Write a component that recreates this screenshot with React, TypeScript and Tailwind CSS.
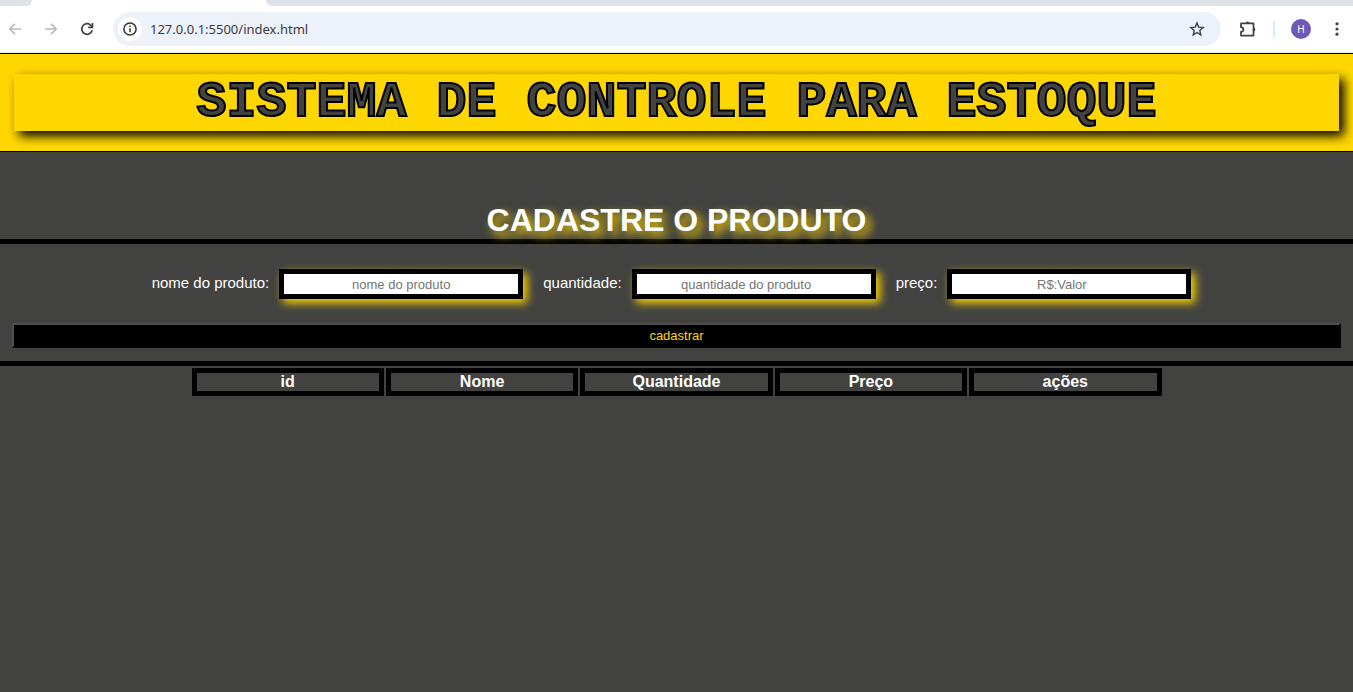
import React from "react";

const fields = [
  { id: "nome", type: "text", label: "nome do produto:", placeholder: "nome do produto" },
  { id: "quantidade", type: "number", label: "quantidade:", placeholder: "quantidade do produto" },
  { id: "preco", type: "number", label: "preço:", placeholder: "R$:Valor" },
];

const columns = ["id", "Nome", "Quantidade", "Preço", "ações"];

function Arrow({ flip = false }: { flip?: boolean }) {
  return (
    <svg viewBox="0 0 16 16" className={flip ? "size-4 rotate-180" : "size-4"} fill="none" stroke="#b9bbb9" strokeWidth="1.7">
      <path d="M14 8H3M8 2.8 2.8 8 8 13.2" />
    </svg>
  );
}

function BrowserBar() {
  return (
    <div className="bg-white font-['Noto_Sans',sans-serif]">
      <div className="flex h-1.5 justify-between bg-white">
        <div className="w-8 rounded-br-lg bg-[#dee1e8]" />
        <div className="ml-[234px] flex-1 rounded-bl-lg bg-[#dee1e8]" />
      </div>
      <div className="flex h-[46px] items-center pr-2">
        <button aria-label="Voltar" className="ml-[7px]"><Arrow /></button>
        <button aria-label="Avançar" className="ml-5"><Arrow flip /></button>
        <button aria-label="Recarregar" className="ml-5">
          <svg viewBox="0 0 16 16" className="size-4" fill="none" stroke="#414344" strokeWidth="1.7">
            <path d="M13.2 9.3A5.3 5.3 0 1 1 12 4.4L13.5 6" />
            <path d="M13.5 2v4.3H9.2" />
          </svg>
        </button>
        <div className="ml-[18px] flex h-[34px] flex-1 items-center rounded-full bg-[#ecf1fa] pr-4 pl-[5px]">
          <button aria-label="Informações do site" className="grid size-6 place-items-center rounded-full bg-white">
            <svg viewBox="0 0 16 16" className="size-4" fill="none" stroke="#303234" strokeWidth="1.5">
              <circle cx="8" cy="8" r="6.1" />
              <path d="M8 7.2v4M8 4.5v1.6" />
            </svg>
          </button>
          <input
            aria-label="Endereço"
            defaultValue="127.0.0.1:5500/index.html"
            className="ml-2 min-w-0 flex-1 bg-transparent text-[13px] leading-5 text-[#3a3c3f] outline-none"
          />
          <button aria-label="Favoritar">
            <svg viewBox="0 0 16 16" className="size-4" fill="none" stroke="#414344" strokeWidth="1.4">
              <path d="m8 1.9 1.7 4.2 4.5.4-3.4 3 1 4.4L8 11.5l-3.8 2.4 1-4.4-3.4-3 4.5-.4z" />
            </svg>
          </button>
        </div>
        <button aria-label="Extensões" className="ml-[18px]">
          <svg viewBox="0 0 18 18" className="size-[18px]" fill="none" stroke="#414344" strokeWidth="1.8" strokeLinejoin="round">
            <path d="M2 3.4h12.5v12.2H2v-3.8c3.2-.2 3.2-4.4 0-4.6z" />
            <path d="M6.8 3.2a1.8 1.8 0 0 1 3.6 0zM14.7 7.8a1.7 1.7 0 0 1 0 3.4z" fill="#414344" stroke="none" />
          </svg>
        </button>
        <div className="ml-4 h-4 w-0.5 bg-[#ceeffa]" />
        <button aria-label="Perfil" className="ml-4 grid size-5 place-items-center rounded-full bg-[#7058b8] text-[10px] text-white">
          H
        </button>
        <button aria-label="Menu" className="ml-[18px]">
          <svg viewBox="0 0 16 16" className="size-4" fill="#414344">
            <circle cx="8" cy="2.8" r="1.6" />
            <circle cx="8" cy="8" r="1.6" />
            <circle cx="8" cy="13.2" r="1.6" />
          </svg>
        </button>
      </div>
      <div className="h-px bg-[#e3e4e6]" />
    </div>
  );
}

export default function App() {
  return (
    <div className="min-h-screen bg-[#424240] font-['Liberation_Sans',Arial,sans-serif] text-white">
      <BrowserBar />
      <header className="border-y border-black bg-[#ffd700] px-3.5 py-5">
        <h1 className="text-center font-['Liberation_Mono','Courier_New',monospace] text-[50px] leading-[57px] font-bold text-[#424240] shadow-[5px_5px_10px_black] [-webkit-text-stroke:2px_black]">
          SISTEMA DE CONTROLE PARA ESTOQUE
        </h1>
      </header>
      <main>
        <h2 className="mt-[50px] border-b-5 border-black text-center text-[32px] leading-[37px] font-bold [text-shadow:5px_5px_10px_#ffd700]">
          CADASTRE O PRODUTO
        </h2>
        <form className="border-b-5 border-black px-3 pt-[25px] pb-[13px]" onSubmit={(e) => e.preventDefault()}>
          <div className="mr-2.5 flex flex-wrap items-center justify-center gap-5">
            {fields.map((f) => (
              <div key={f.id} className="flex items-center gap-2.5">
                <label htmlFor={f.id} className="pb-0.5 text-[15px] leading-5">
                  {f.label}
                </label>
                <input
                  id={f.id}
                  type={f.type}
                  placeholder={f.placeholder}
                  className="h-[30px] w-[244px] border-5 border-black bg-white text-center text-[13px] text-black shadow-[4px_4px_10px_#ffd700] placeholder:text-[#757575]"
                />
              </div>
            ))}
          </div>
          <button
            type="submit"
            className="mt-6 block w-full border-2 border-t-[#4e4e4e] border-r-black border-b-black border-l-[#4e4e4e] bg-black text-[13px] leading-[21px] text-[#ffd700]"
          >
            cadastrar
          </button>
        </form>
        <table className="mx-auto mt-0.5 w-[974px] max-w-full table-fixed border-separate border-spacing-x-0.5 border-spacing-y-0">
          <thead>
            <tr>
              {columns.map((c) => (
                <th key={c} className="border-5 border-black text-center text-base leading-[18px] font-bold">
                  {c}
                </th>
              ))}
            </tr>
          </thead>
        </table>
      </main>
    </div>
  );
}
